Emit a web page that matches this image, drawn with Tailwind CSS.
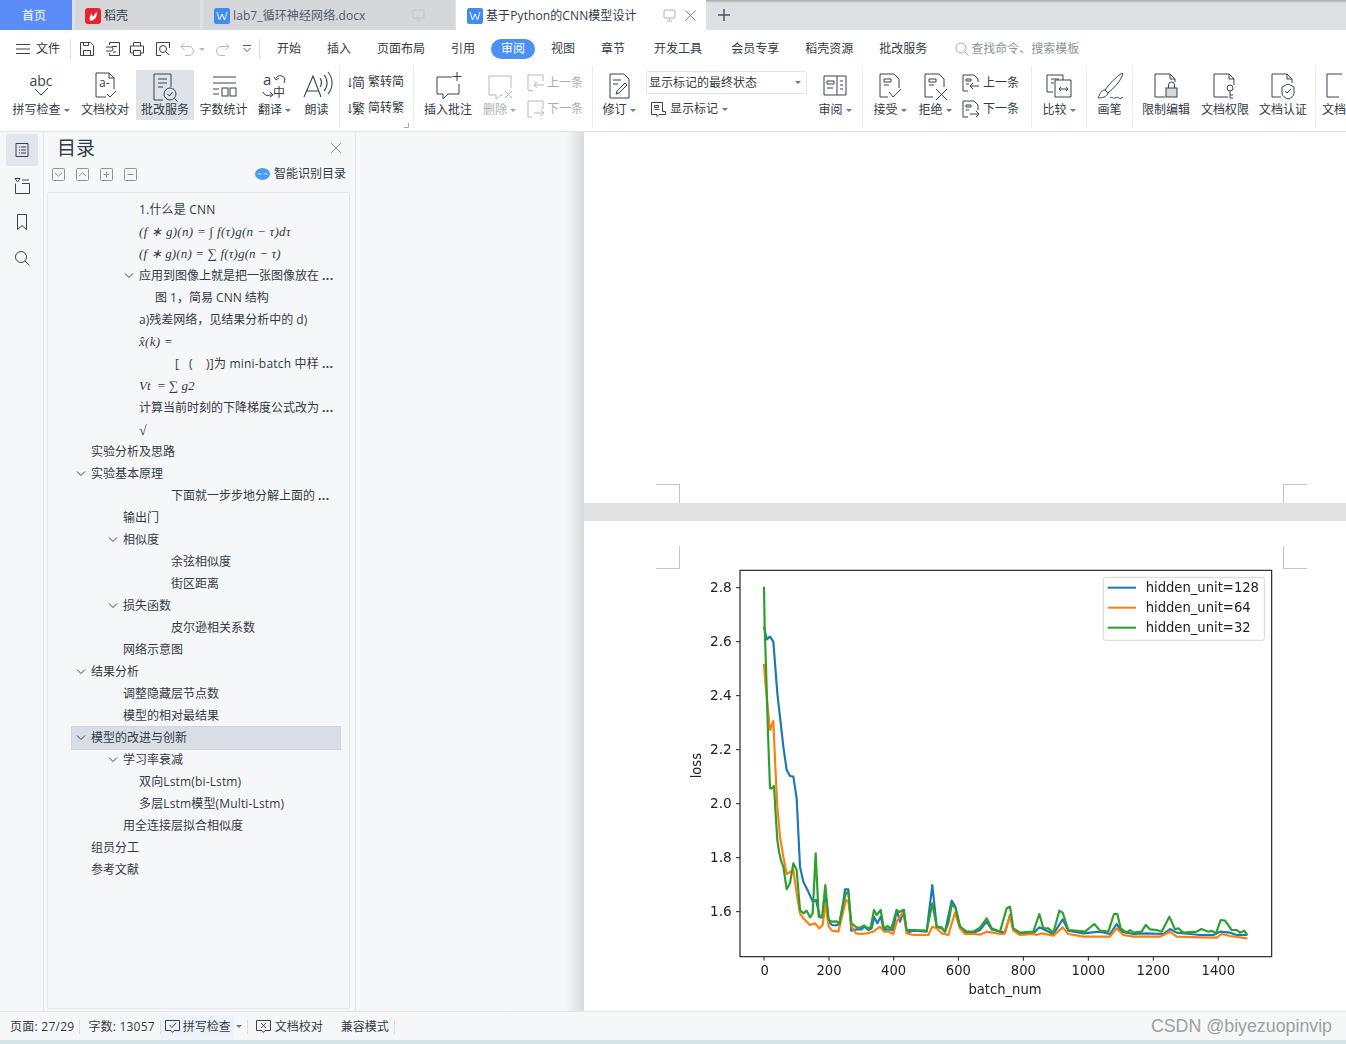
<!DOCTYPE html>
<html lang="zh">
<head>
<meta charset="utf-8">
<title>基于Python的CNN模型设计</title>
<script src="https://cdn.jsdelivr.net/npm/@tailwindcss/browser@4"></script>
</head>
<body class="w-[1346px] h-[1044px] overflow-hidden bg-white text-[12px] text-[#333a45] [font-family:'Open_Sans','Noto_Sans_CJK_SC',sans-serif]">
<div class="flex flex-col h-[1044px]">

<!-- tab bar -->
<div class="relative flex h-[30px] shrink-0 bg-[#dfe0e4]">
  <div class="absolute top-0 left-[706px] right-0 h-[3px] bg-gradient-to-b from-[#a5a6a9] to-transparent"></div>
  <div class="w-[72px] flex items-center justify-center bg-[#5b8cf8] text-white pt-[1px] pr-[4px]">首页</div>
  <div class="ml-[3px] w-[125px] flex items-center pl-[10px] pt-[1px] bg-[#d6d7db]">
    <svg class="w-[16px] h-[16px]" viewBox="0 0 16 16"><rect width="16" height="16" rx="3" fill="#e8222e"/><path d="M5 13c-1-3 0-6 2-8 0 2 0 3 1 4 1-2 2-4 4-5 0 4-1 8-7 9z" fill="#fff"/></svg>
    <span class="ml-[3px]">稻壳</span>
  </div>
  <div class="ml-[3px] w-[252px] flex items-center pl-[11px] pt-[1px] bg-[#d6d7db] text-[#555b66]">
    <svg class="w-[16px] h-[16px]" viewBox="0 0 16 16"><rect width="16" height="16" rx="2" fill="#3f8cf5"/><path d="M3 4l2.500 8L8 6l2.500 6L13 4" fill="none" stroke="#fff"/></svg>
    <span class="ml-[3px] tracking-[.1px]">lab7_循环神经网络.docx</span>
    <svg class="ml-auto mr-[30px] w-[13px] h-[13px]" viewBox="0 0 13 13" fill="none" stroke="#c3c5ca"><rect x="1" y="1" width="11" height="8" rx="1"/><path d="M6.500 9v2M4 12h5"/></svg>
  </div>
  <div class="ml-[1px] w-[250px] flex items-center pl-[11px] pt-[1px] bg-white">
    <svg class="w-[16px] h-[16px]" viewBox="0 0 16 16"><rect width="16" height="16" rx="2" fill="#3f8cf5"/><path d="M3 4l2.500 8L8 6l2.500 6L13 4" fill="none" stroke="#fff"/></svg>
    <span class="ml-[3px] tracking-[.1px]">基于Python的CNN模型设计</span>
    <svg class="ml-auto w-[13px] h-[13px]" viewBox="0 0 13 13" fill="none" stroke="#aeb1b7"><rect x="1" y="1" width="11" height="8" rx="1"/><path d="M6.500 9v2M4 12h5"/></svg>
    <svg class="ml-[9px] mr-[10px] w-[11px] h-[11px]" viewBox="0 0 11 11" stroke="#80858e"><path d="M.5.5l10 10M10.500.5l-10 10"/></svg>
  </div>
  <svg class="ml-[12px] mt-[9px] w-[12px] h-[12px]" viewBox="0 0 12 12" stroke="#4a5568" stroke-width="1.500"><path d="M6 0v12M0 6h12"/></svg>
</div>

<!-- menu row -->
<div class="flex items-center h-[36px] shrink-0 bg-white pt-[2px]">
  <svg class="ml-[16px] w-[14px] h-[12px]" viewBox="0 0 14 12" stroke="#3a4150"><path d="M0 1.500h14M0 6h14M0 10.500h14"/></svg>
  <span class="ml-[6px] w-[24px]">文件</span>
  <i class="ml-[10px] w-px h-[20px] bg-[#dfe0e3]"></i>
  <svg class="ml-[8px] w-[16px] h-[16px]" viewBox="0 0 16 16" fill="none" stroke="#3a4150"><path d="M1.500 1.500h10l3 3v10h-13zM4.500 14.500v-5h7v5M4.500 1.500v3h5v-3"/></svg>
  <svg class="ml-[10px] w-[16px] h-[16px]" viewBox="0 0 16 16" fill="none" stroke="#3a4150"><path d="M4.500 4V1.500h10v13h-10V12M1 6h5a2 2 0 012 2 2 2 0 01-2 2H1M12 5.500H7M11 11H8"/></svg>
  <svg class="ml-[8px] w-[16px] h-[16px]" viewBox="0 0 16 16" fill="none" stroke="#3a4150"><path d="M4.500 5V1.500h7V5M4.500 12h-3V5h13v7h-3M4.500 9.500h7v5h-7z"/></svg>
  <svg class="ml-[10px] w-[16px] h-[16px]" viewBox="0 0 16 16" fill="none" stroke="#3a4150"><path d="M6 14.500H1.500v-13h13V7"/><circle cx="8" cy="8" r="3.500"/><path d="M10.500 10.500l3.500 3.500"/></svg>
  <svg class="ml-[9px] w-[15px] h-[14px]" viewBox="0 0 15 14" fill="none" stroke="#b4b7bd"><path d="M4.500 1L1 4.500 4.500 8M1 4.500h8a4.500 4.500 0 010 9H5"/></svg>
  <i class="ml-[4px] border-x-[3px] border-t-[3px] border-x-transparent border-t-[#b4b7bd]"></i>
  <svg class="ml-[10px] w-[15px] h-[14px]" viewBox="0 0 15 14" fill="none" stroke="#b4b7bd"><path d="M10.500 1L14 4.500 10.500 8M14 4.500H6a4.500 4.500 0 000 9h4"/></svg>
  <svg class="ml-[13px] w-[8px] h-[8px]" viewBox="0 0 8 8" fill="none" stroke="#555b66"><path d="M0 .5h8M.5 3l3.500 3.500L7.500 3"/></svg>
  <i class="ml-[8px] w-px h-[20px] bg-[#dfe0e3]"></i>
  <div class="ml-[17px] flex items-center gap-[26px] whitespace-nowrap">
    <span>开始</span><span>插入</span><span>页面布局</span><span>引用</span>
    <span class="mx-[-10px] px-[10px] h-[20px] leading-[20px] rounded-full bg-[#4a90f5] text-white">审阅</span>
    <span>视图</span><span>章节</span><span class="ml-[3px]">开发工具</span><span class="ml-[3px]">会员专享</span><span>稻壳资源</span><span>批改服务</span>
  </div>
  <svg class="ml-[28px] w-[14px] h-[14px]" viewBox="0 0 14 14" fill="none" stroke="#a3a9b5"><circle cx="6" cy="6" r="5"/><path d="M9.500 9.500L13.500 13.500"/></svg>
  <span class="ml-[2px] text-[#8b92a0]">查找命令、搜索模板</span>
</div>

<!-- ribbon -->
<div class="flex *:shrink-0 h-[66px] shrink-0 overflow-hidden bg-white border-b border-[#e4e5e8] whitespace-nowrap pl-[8px]">
  <div class="w-[66px] flex flex-col items-center pt-[4px]">
    <svg class="w-[32px] h-[32px]" viewBox="0 0 32 32" fill="none" stroke="#3a4150"><text x="16" y="16" text-anchor="middle" stroke="none" class="fill-[#3a4150] text-[14px]">abc</text><path d="M10 19l6 6 7-7"/></svg>
    <span class="h-[16px] leading-[16px] flex items-center">拼写检查<i class="ml-[3px] border-x-[3px] border-t-[3px] border-x-transparent border-t-[#777]"></i></span>
  </div>
  <div class="w-[62px] flex flex-col items-center pt-[4px]">
    <svg class="w-[32px] h-[32px]" viewBox="0 0 32 32" fill="none" stroke="#3a4150"><path d="M17 27H7V3h13l5 5v11M20 3v5h5"/><text x="10" y="17" stroke="none" class="fill-[#3a4150] text-[12px]">a-</text><path d="M18 24l3 3 6-6"/></svg>
    <span class="h-[16px] leading-[16px]">文档校对</span>
  </div>
  <div class="w-[58px] h-[50px] flex flex-col items-center pt-[3px] mt-[4px] bg-[#dfe3e8]">
    <svg class="w-[32px] h-[29px]" viewBox="0 0 32 29" fill="none" stroke="#3a4150"><path d="M14 27H5V1h17v13M9 6h9M9 10h9M9 14h5"/><circle cx="21" cy="21" r="6"/><path d="M18.500 21l2 2 3-4M25.500 25.500l3 3"/></svg>
    <span class="h-[16px] leading-[16px]">批改服务</span>
  </div>
  <div class="w-[59px] flex flex-col items-center pt-[4px]">
    <svg class="w-[32px] h-[32px]" viewBox="0 0 32 32" fill="none" stroke="#3a4150"><path d="M5 7h23M5 13h23M5 19h6M5 24h6"/><rect x="14" y="18" width="6" height="8"/><rect x="22" y="18" width="6" height="8"/></svg>
    <span class="h-[16px] leading-[16px]">字数统计</span>
  </div>
  <div class="w-[41px] flex flex-col items-center pt-[4px] pl-[2px]">
    <svg class="w-[32px] h-[32px]" viewBox="0 0 32 32" fill="none" stroke="#3a4150"><text x="4" y="15" stroke="none" class="fill-[#3a4150] text-[15px]">a</text><text x="14" y="27" stroke="none" class="fill-[#3a4150] text-[12px]">中</text><path d="M17 8a5 5 0 019 1l-1 4M15 7l2 3 3-2M4 22a5 5 0 007 3h2M11 22l3 3-3 2"/></svg>
    <span class="h-[16px] leading-[16px] flex items-center">翻译<i class="ml-[3px] border-x-[3px] border-t-[3px] border-x-transparent border-t-[#777]"></i></span>
  </div>
  <div class="w-[45px] flex flex-col items-center pt-[4px]">
    <svg class="w-[32px] h-[32px]" viewBox="0 0 32 32" fill="none" stroke="#3a4150"><path d="M3 27L12 6l8 21M6 21h11M19 8a8 8 0 010 9M23 5a12 12 0 010 16M27 2a17 17 0 010 22" stroke-width="1.100"/></svg>
    <span class="h-[16px] leading-[16px]">朗读</span>
  </div>
  <i class="w-px h-[62px] bg-[#ebecee]"></i>
  <div class="relative w-[73px] pl-[8px] pt-[5px] flex flex-col gap-[4px]">
    <div class="h-[22px] flex items-center"><svg class="w-[4px] h-[14px]" viewBox="0 0 4 14" fill="none" stroke="#3a4150"><path d="M2 3v9M.5 10.500L2 12l1.500-1.500"/></svg><span class="text-[13px] leading-[20px] w-[16px]">简</span><span>繁转简</span></div>
    <div class="h-[22px] flex items-center"><svg class="w-[4px] h-[14px]" viewBox="0 0 4 14" fill="none" stroke="#3a4150"><path d="M2 3v9M.5 10.500L2 12l1.500-1.500"/></svg><span class="text-[13px] leading-[20px] w-[16px]">繁</span><span>简转繁</span></div>
    <svg class="absolute right-[4px] bottom-[3px] w-[5px] h-[5px]" viewBox="0 0 5 5" stroke="#a5a9b0" fill="none"><path d="M4.500 0v4.500H0"/></svg>
  </div>
  <i class="w-px h-[62px] bg-[#ebecee]"></i>
  <div class="w-[68px] flex flex-col items-center pt-[4px]">
    <svg class="w-[32px] h-[32px]" viewBox="0 0 32 32" fill="none" stroke="#3a4150"><path d="M20 7H5v17h6v5l5-5h11V14M25 2v9M20.500 6.500h9"/></svg>
    <span class="h-[16px] leading-[16px]">插入批注</span>
  </div>
  <div class="w-[35px] flex flex-col items-center pt-[4px] text-[#a9adb5]">
    <svg class="w-[32px] h-[32px]" viewBox="0 0 32 32" fill="none" stroke="#b4b7bd"><path d="M5 6h22v12M5 6v19h7v4l5-4h2M21 21l7 7M28 21l-7 7"/></svg>
    <span class="h-[16px] leading-[16px] flex items-center">删除<i class="ml-[3px] border-x-[3px] border-t-[3px] border-x-transparent border-t-[#aaa]"></i></span>
  </div>
  <div class="w-[75px] pl-[10px] pt-[7px] flex flex-col gap-[6px] text-[#a9adb5]">
    <div class="h-[20px] flex items-center"><svg class="w-[18px] h-[18px]" viewBox="0 0 18 18" fill="none" stroke="#b4b7bd"><path d="M6 17l-5-1V1h15v6M17 11H7M10 8l-3 3 3 3"/></svg><span class="ml-[2px]">上一条</span></div>
    <div class="h-[20px] flex items-center"><svg class="w-[18px] h-[18px]" viewBox="0 0 18 18" fill="none" stroke="#b4b7bd"><path d="M5 17H1V1h15v8M7 13h10M14 10l3 3-3 3"/></svg><span class="ml-[2px]">下一条</span></div>
  </div>
  <i class="w-px h-[62px] bg-[#ebecee]"></i>
  <div class="w-[50px] flex flex-col items-center pt-[4px] pl-[2px]">
    <svg class="w-[32px] h-[32px]" viewBox="0 0 32 32" fill="none" stroke="#3a4150"><path d="M7 4h14l5 5v19H7zM10 10h8M10 14h5M13 24l1-3 8-8 2 2-8 8z"/></svg>
    <span class="h-[16px] leading-[16px] flex items-center">修订<i class="ml-[3px] border-x-[3px] border-t-[3px] border-x-transparent border-t-[#777]"></i></span>
  </div>
  <div class="w-[168px] pl-[3px] pt-[5px]">
    <div class="w-[161px] h-[23px] flex items-center pl-[2px] pr-[5px] border border-[#e4e5e8] rounded-[2px]"><span>显示标记的最终状态</span><i class="ml-auto border-x-[3px] border-t-[3px] border-x-transparent border-t-[#777]"></i></div>
    <div class="mt-[4px] h-[22px] flex items-center pl-[4px]">
      <svg class="w-[17px] h-[17px]" viewBox="0 0 17 17" fill="none" stroke="#3a4150"><path d="M1.500 1.500h11v9h3v3H9l-2 2v-2H1.500zM4.500 4.500h4v2h-4zM4.500 8.500h5"/></svg>
      <span class="ml-[3px]">显示标记</span><i class="ml-[4px] border-x-[3px] border-t-[3px] border-x-transparent border-t-[#777]"></i>
    </div>
  </div>
  <div class="w-[51px] flex flex-col items-center pt-[4px] pr-[3px]">
    <svg class="w-[32px] h-[32px]" viewBox="0 0 32 32" fill="none" stroke="#3a4150"><path d="M5 6h22v19H5zM18 6v19M8 11h7v3H8zM8 18h6M21 11h3M21 15h3M21 19h3"/></svg>
    <span class="h-[16px] leading-[16px] flex items-center">审阅<i class="ml-[3px] border-x-[3px] border-t-[3px] border-x-transparent border-t-[#777]"></i></span>
  </div>
  <i class="w-px h-[62px] bg-[#ebecee]"></i>
  <div class="w-[50px] flex flex-col items-center pt-[4px] pl-[4px]">
    <svg class="w-[32px] h-[32px]" viewBox="0 0 32 32" fill="none" stroke="#3a4150"><path d="M14 27H6V4h14l5 5v9M10 9h7v3h-7zM10 15h5M15 22l4 5 8-8"/></svg>
    <span class="h-[16px] leading-[16px] flex items-center">接受<i class="ml-[3px] border-x-[3px] border-t-[3px] border-x-transparent border-t-[#777]"></i></span>
  </div>
  <div class="w-[46px] flex flex-col items-center pt-[4px] pr-[2px]">
    <svg class="w-[32px] h-[32px]" viewBox="0 0 32 32" fill="none" stroke="#3a4150"><path d="M14 27H6V4h14l5 5v8M10 9h7v3h-7zM10 15h5M17 19l11 11M28 19L17 30"/></svg>
    <span class="h-[16px] leading-[16px] flex items-center">拒绝<i class="ml-[3px] border-x-[3px] border-t-[3px] border-x-transparent border-t-[#777]"></i></span>
  </div>
  <div class="w-[72px] pl-[3px] pt-[7px] flex flex-col gap-[6px]">
    <div class="h-[20px] flex items-center"><svg class="w-[18px] h-[18px]" viewBox="0 0 18 18" fill="none" stroke="#3a4150"><path d="M6 17H1V1h11l4 4v3M4 5h5v2H4zM4 10h3M17 12H8M11 9l-3 3 3 3"/></svg><span class="ml-[3px]">上一条</span></div>
    <div class="h-[20px] flex items-center"><svg class="w-[18px] h-[18px]" viewBox="0 0 18 18" fill="none" stroke="#3a4150"><path d="M6 17H1V1h11l4 4v5M4 5h5v2H4zM4 10h3M8 14h9M14 11l3 3-3 3"/></svg><span class="ml-[3px]">下一条</span></div>
  </div>
  <i class="w-px h-[62px] bg-[#ebecee]"></i>
  <div class="w-[54px] flex flex-col items-center pt-[4px]">
    <svg class="w-[32px] h-[32px]" viewBox="0 0 32 32" fill="none" stroke="#3a4150"><path d="M10 22H4V5h16v5M8 9h8M8 13h3M12 10h16v17H12zM16 19h9M18 17l-2 2 2 2M23 17l2 2-2 2"/></svg>
    <span class="h-[16px] leading-[16px] flex items-center">比较<i class="ml-[3px] border-x-[3px] border-t-[3px] border-x-transparent border-t-[#777]"></i></span>
  </div>
  <i class="w-px h-[62px] bg-[#ebecee]"></i>
  <div class="w-[45px] flex flex-col items-center pt-[4px]">
    <svg class="w-[32px] h-[32px]" viewBox="0 0 32 32" fill="none" stroke="#3a4150"><path d="M28 3c-6 4-12 10-17 17l3 3c6-5 12-11 15-19zM11 20c-4 0-5 4-7 8 4 0 9-1 10-5M16 28c2-2 3 1 5 0s3-1 4 0 3 0 4-1"/></svg>
    <span class="h-[16px] leading-[16px]">画笔</span>
  </div>
  <i class="w-px h-[62px] bg-[#ebecee]"></i>
  <div class="w-[66px] flex flex-col items-center pt-[4px]">
    <svg class="w-[32px] h-[32px]" viewBox="0 0 32 32" fill="none" stroke="#3a4150"><path d="M15 27H5V4h15l5 5v3M20 4v5h5"/><rect x="16" y="18" width="11" height="9" fill="#d5d7db"/><path d="M18.500 18v-3a3 3 0 016 0v3"/></svg>
    <span class="h-[16px] leading-[16px]">限制编辑</span>
  </div>
  <div class="w-[52px] flex flex-col items-center pt-[4px]">
    <svg class="w-[32px] h-[32px]" viewBox="0 0 32 32" fill="none" stroke="#3a4150"><path d="M19 27H5V4h15l5 5v6M20 4v5h5"/><circle cx="21" cy="18" r="3"/><path d="M21 21v7M21 25h3M21 28h3"/></svg>
    <span class="h-[16px] leading-[16px]">文档权限</span>
  </div>
  <div class="w-[64px] flex flex-col items-center pt-[4px]">
    <svg class="w-[32px] h-[32px]" viewBox="0 0 32 32" fill="none" stroke="#3a4150"><path d="M14 27H5V4h15l5 5v4M20 4v5h5"/><path d="M15 17l6-3 6 3v6c0 3-3 5-6 6-3-1-6-3-6-6zM18 21l2 2 4-4"/></svg>
    <span class="h-[16px] leading-[16px]">文档认证</span>
  </div>
  <i class="w-px h-[62px] bg-[#ebecee]"></i>
  <div class="w-[40px] flex flex-col pl-[6px] pt-[4px]">
    <svg class="w-[32px] h-[32px]" viewBox="0 0 32 32" fill="none" stroke="#3a4150"><path d="M17 27H5V4h15"/></svg>
    <span class="h-[16px] leading-[16px]">文档</span>
  </div>
</div>

<!-- main -->
<div class="flex flex-1 min-h-0">
  <!-- rail -->
  <div class="w-[44px] shrink-0 bg-[#f6f7f9] border-r border-[#e3e5e9] flex flex-col items-start pl-[6px] pt-[2px]">
    <div class="w-[32px] h-[32px] rounded-[2px] bg-[#e2e5eb] flex items-center justify-center">
      <svg class="w-[16px] h-[16px]" viewBox="0 0 16 16" fill="none" stroke="#3a4150"><path d="M2 1.500h12v13H2zM5 5h1M7 5h5M5 8h1M7 8h5M5 11h1M7 11h5"/></svg>
    </div>
    <div class="w-[32px] h-[36px] flex items-center justify-center mt-[2px]">
      <svg class="w-[16px] h-[16px]" viewBox="0 0 16 16" fill="none" stroke="#3a4150"><path d="M1.500 5.500v10h14v-10H8M1 .5h5L3.500 4zM8 2h7"/></svg>
    </div>
    <div class="w-[32px] h-[36px] flex items-center justify-center">
      <svg class="w-[12px] h-[16px]" viewBox="0 0 12 16" fill="none" stroke="#3a4150"><path d="M1.500.5h9v15L6 11.500 1.500 15.500z"/></svg>
    </div>
    <div class="w-[32px] h-[36px] flex items-center justify-center">
      <svg class="w-[16px] h-[16px]" viewBox="0 0 16 16" fill="none" stroke="#3a4150"><circle cx="7" cy="7" r="5.500"/><path d="M11 11l4.500 4.500"/></svg>
    </div>
  </div>

  <!-- outline panel -->
  <div class="w-[312px] shrink-0 bg-[#f6f7f9] border-r border-[#e3e5e9] flex flex-col">
    <div class="h-[32px] flex items-center pl-[13px] pr-[14px]">
      <span class="text-[19px]">目录</span>
      <svg class="ml-auto w-[10px] h-[10px]" viewBox="0 0 10 10" stroke="#80858e"><path d="M0 0l10 10M10 0L0 10"/></svg>
    </div>
    <div class="h-[20px] flex items-center pl-[8px] pr-[9px]">
      <svg class="w-[13px] h-[13px]" viewBox="0 0 13 13" fill="none" stroke="#8f949c"><rect x=".5" y=".5" width="12" height="12" rx="1"/><path d="M3 5l3.500 3L10 5"/></svg>
      <svg class="ml-[11px] w-[13px] h-[13px]" viewBox="0 0 13 13" fill="none" stroke="#8f949c"><rect x=".5" y=".5" width="12" height="12" rx="1"/><path d="M3 8l3.500-3L10 8"/></svg>
      <svg class="ml-[11px] w-[13px] h-[13px]" viewBox="0 0 13 13" fill="none" stroke="#8f949c"><rect x=".5" y=".5" width="12" height="12" rx="1"/><path d="M3.500 6.500h6M6.500 3.500v6"/></svg>
      <svg class="ml-[11px] w-[13px] h-[13px]" viewBox="0 0 13 13" fill="none" stroke="#8f949c"><rect x=".5" y=".5" width="12" height="12" rx="1"/><path d="M3.500 6.500h6"/></svg>
      <svg class="ml-auto w-[15px] h-[12px]" viewBox="0 0 15 12"><ellipse cx="7.500" cy="6" rx="7.500" ry="6" fill="#4b9bf5"/><path d="M3 6.500c1-1.500 2.500-1.500 3 0M9 6.500c1-1.500 2.500-1.500 3 0" fill="none" stroke="#fff"/></svg>
      <span class="ml-[4px]">智能识别目录</span>
    </div>
    <div class="ml-[3px] mt-[8px] w-[303px] h-[817px] bg-[#f6f7f9] border border-[#e6e8eb] rounded-[2px] pt-[6px] whitespace-nowrap">
      <div class="h-[22px] flex items-center pl-[91px] tracking-[.2px]">1.什么是 CNN</div>
      <div class="h-[22px] flex items-center pl-[91px] text-[13px] italic tracking-[.3px] [font-family:'Liberation_Serif',serif]">(f ∗ g)(n) = ∫ f(τ)g(n − τ)dτ</div>
      <div class="h-[22px] flex items-center pl-[91px] text-[13px] italic tracking-[.15px] [font-family:'Liberation_Serif',serif]">(f ∗ g)(n) = ∑ f(τ)g(n − τ)</div>
      <div class="h-[22px] flex items-center pl-[76px]"><svg class="w-[15px] h-[6px]" viewBox="0 0 15 6" fill="none" stroke="#3a4150"><path d="M1 .5l4 4 4-4"/></svg>应用到图像上就是把一张图像放在<span class="ml-[3px] font-bold tracking-[.4px]">...</span></div>
      <div class="h-[22px] flex items-center pl-[107px]">图 1，简易 CNN 结构</div>
      <div class="h-[22px] flex items-center pl-[91px]">a)残差网络，见结果分析中的 d)</div>
      <div class="h-[22px] flex items-center pl-[91px] text-[13px] italic tracking-[.3px] [font-family:'Liberation_Serif',serif]">x̂(k) =</div>
      <div class="h-[22px] flex items-center pl-[127px] whitespace-pre tracking-[.2px]">[   (    )]为 mini-batch 中样<span class="ml-[3px] font-bold tracking-[.4px]">...</span></div>
      <div class="h-[22px] flex items-center pl-[91px] text-[13px] italic whitespace-pre [font-family:'Liberation_Serif',serif]">Vt  = ∑ g2</div>
      <div class="h-[22px] flex items-center pl-[91px]">计算当前时刻的下降梯度公式改为<span class="ml-[3px] font-bold tracking-[.4px]">...</span></div>
      <div class="h-[22px] flex items-center pl-[91px] text-[14px] [font-family:'Liberation_Serif',serif]">√</div>
      <div class="h-[22px] flex items-center pl-[43px]">实验分析及思路</div>
      <div class="h-[22px] flex items-center pl-[28px]"><svg class="w-[15px] h-[6px]" viewBox="0 0 15 6" fill="none" stroke="#3a4150"><path d="M1 .5l4 4 4-4"/></svg>实验基本原理</div>
      <div class="h-[22px] flex items-center pl-[123px]">下面就一步步地分解上面的<span class="ml-[3px] font-bold tracking-[.4px]">...</span></div>
      <div class="h-[22px] flex items-center pl-[75px]">输出门</div>
      <div class="h-[22px] flex items-center pl-[60px]"><svg class="w-[15px] h-[6px]" viewBox="0 0 15 6" fill="none" stroke="#3a4150"><path d="M1 .5l4 4 4-4"/></svg>相似度</div>
      <div class="h-[22px] flex items-center pl-[123px]">余弦相似度</div>
      <div class="h-[22px] flex items-center pl-[123px]">街区距离</div>
      <div class="h-[22px] flex items-center pl-[60px]"><svg class="w-[15px] h-[6px]" viewBox="0 0 15 6" fill="none" stroke="#3a4150"><path d="M1 .5l4 4 4-4"/></svg>损失函数</div>
      <div class="h-[22px] flex items-center pl-[123px]">皮尔逊相关系数</div>
      <div class="h-[22px] flex items-center pl-[75px]">网络示意图</div>
      <div class="h-[22px] flex items-center pl-[28px]"><svg class="w-[15px] h-[6px]" viewBox="0 0 15 6" fill="none" stroke="#3a4150"><path d="M1 .5l4 4 4-4"/></svg>结果分析</div>
      <div class="h-[22px] flex items-center pl-[75px]">调整隐藏层节点数</div>
      <div class="h-[22px] flex items-center pl-[75px]">模型的相对最结果</div>
      <div class="ml-[23px] w-[270px] h-[24px] my-[-1px] flex items-center pl-[4px] bg-[#d9dee6] border border-[#d1d6de]"><svg class="w-[15px] h-[6px]" viewBox="0 0 15 6" fill="none" stroke="#3a4150"><path d="M1 .5l4 4 4-4"/></svg>模型的改进与创新</div>
      <div class="h-[22px] flex items-center pl-[60px]"><svg class="w-[15px] h-[6px]" viewBox="0 0 15 6" fill="none" stroke="#3a4150"><path d="M1 .5l4 4 4-4"/></svg>学习率衰减</div>
      <div class="h-[22px] flex items-center pl-[91px] tracking-[.15px]">双向Lstm(bi-Lstm)</div>
      <div class="h-[22px] flex items-center pl-[91px] tracking-[.15px]">多层Lstm模型(Multi-Lstm)</div>
      <div class="h-[22px] flex items-center pl-[75px]">用全连接层拟合相似度</div>
      <div class="h-[22px] flex items-center pl-[43px]">组员分工</div>
      <div class="h-[22px] flex items-center pl-[43px]">参考文献</div>
    </div>
  </div>

  <!-- gutter -->
  <div class="w-[228px] shrink-0 bg-gradient-to-r from-[#f6f7f9] from-[92%] to-[#d9dadd]"></div>

  <!-- document -->
  <div class="flex-1 min-w-0 flex flex-col bg-white">
    <div class="relative h-[371px] shrink-0 bg-white">
      <i class="absolute left-[72px] top-[352px] w-[24px] h-[19px] border-t border-r border-[#c4c4c4]"></i>
      <i class="absolute left-[699px] top-[352px] w-[24px] h-[19px] border-t border-l border-[#c4c4c4]"></i>
    </div>
    <div class="h-[18px] shrink-0 bg-[#e0e1e3]"></div>
    <div class="relative flex-1 min-h-0 overflow-hidden bg-white">
      <i class="absolute left-[72px] top-[25px] w-[24px] h-[23px] border-b border-r border-[#c4c4c4]"></i>
      <i class="absolute left-[699px] top-[25px] w-[24px] h-[23px] border-b border-l border-[#c4c4c4]"></i>
      <svg class="ml-[96px] mt-[39px] w-[610px] h-[440px] blur-[.5px]" viewBox="0 0 1830 1320">
        <rect x="180" y="31" width="1595" height="1159" fill="none" stroke="#222" stroke-width="3.500"/>
        <path d="M252 1190v12M447 1190v12M641 1190v12M835 1190v12M1030 1190v12M1225 1190v12M1420 1190v12M1615 1190v12M180 83h-12M180 245h-12M180 407h-12M180 569h-12M180 731h-12M180 893h-12M180 1055h-12" stroke="#222" stroke-width="3"/>
        <polyline fill="none" stroke="#1f77b4" stroke-width="6.500" stroke-linejoin="round" points="252,200 260,238 270,230 280,245 292,400 310,560 320,630 330,648 340,650 350,715 360,920 370,965 385,995 398,1025 408,1020 420,1072 430,1070 436,1000 446,1085 456,1095 470,1096 478,1092 490,1025 495,988 505,988 514,1112 530,1108 545,1108 552,1100 565,1110 575,1105 582,1070 592,1090 602,1070 612,1112 622,1108 640,1110 650,1050 660,1085 672,1050 680,1118 700,1112 740,1115 757,975 770,1100 785,1105 795,1115 815,1022 826,1040 840,1100 860,1118 880,1118 900,1110 920,1085 935,1108 960,1115 975,1118 990,1065 1000,1110 1020,1120 1060,1120 1078,1102 1100,1112 1120,1122 1148,1078 1165,1112 1210,1120 1260,1115 1290,1122 1310,1092 1325,1115 1360,1122 1400,1120 1450,1122 1470,1107 1490,1118 1530,1122 1560,1125 1600,1125 1620,1115 1650,1118 1670,1125 1702,1125"/>
        <polyline fill="none" stroke="#ff7f0e" stroke-width="6.500" stroke-linejoin="round" points="252,312 256,370 262,430 270,510 280,483 286,620 292,740 300,830 310,890 320,942 340,930 350,1000 360,1060 370,1075 390,1095 405,1090 418,1105 428,1095 436,1030 446,1100 456,1112 475,1115 498,1020 505,1025 515,1100 528,1120 545,1122 560,1120 580,1115 600,1100 612,1115 625,1115 640,1122 650,1085 670,1055 680,1120 700,1125 745,1125 757,1100 770,1105 785,1120 805,1125 825,1058 840,1105 855,1122 880,1122 900,1124 920,1115 960,1122 972,1122 990,1068 1000,1112 1020,1125 1060,1122 1070,1125 1085,1120 1120,1127 1148,1102 1165,1122 1210,1130 1290,1130 1310,1105 1330,1125 1360,1130 1440,1130 1470,1115 1490,1130 1560,1132 1610,1133 1625,1122 1650,1128 1702,1135"/>
        <polyline fill="none" stroke="#2ca02c" stroke-width="6.500" stroke-linejoin="round" points="252,80 254,200 258,320 264,520 270,685 276,685 282,678 288,780 292,840 298,880 304,905 310,920 320,988 330,970 340,910 350,930 360,1050 370,1060 380,1052 390,1072 398,1060 407,880 416,1070 426,1072 436,975 446,1080 456,1085 470,1084 478,1092 490,1030 498,998 505,998 514,1090 530,1102 540,1103 552,1096 562,1104 572,1102 582,1050 590,1065 602,1050 612,1108 622,1098 634,1106 650,1050 658,1056 670,1050 680,1110 700,1110 740,1112 757,1030 770,1100 785,1102 795,1115 805,1090 815,1035 826,1042 840,1100 860,1115 880,1115 900,1103 920,1075 935,1105 960,1115 980,1045 990,1040 1000,1105 1020,1118 1060,1115 1078,1062 1090,1105 1105,1105 1120,1118 1138,1052 1148,1058 1165,1110 1185,1112 1215,1115 1243,1092 1260,1112 1285,1115 1302,1062 1312,1062 1322,1105 1340,1118 1350,1110 1360,1118 1385,1115 1397,1095 1410,1108 1430,1110 1445,1115 1468,1070 1485,1108 1495,1105 1510,1118 1550,1115 1564,1107 1585,1115 1595,1112 1608,1120 1622,1080 1635,1082 1655,1110 1670,1110 1680,1118 1693,1112 1702,1125"/>
        <rect x="1270" y="52" width="483" height="189" rx="6" fill="#fff" fill-opacity=".9" stroke="#d5d5d5" stroke-width="3"/>
        <path d="M1283 83h85" stroke="#1f77b4" stroke-width="6"/><path d="M1283 143h85" stroke="#ff7f0e" stroke-width="6"/><path d="M1283 203h85" stroke="#2ca02c" stroke-width="6"/>
        <g class="fill-[#222] text-[39.500px] [font-family:'DejaVu_Sans',sans-serif]">
          <text x="1397" y="96">hidden_unit=128</text>
          <text x="1397" y="156">hidden_unit=64</text>
          <text x="1397" y="216">hidden_unit=32</text>
          <g text-anchor="end" class="text-[41px]">
            <text x="155" y="96">2.8</text><text x="155" y="258">2.6</text><text x="155" y="420">2.4</text><text x="155" y="582">2.2</text><text x="155" y="744">2.0</text><text x="155" y="906">1.8</text><text x="155" y="1068">1.6</text>
          </g>
          <g text-anchor="middle">
            <text x="254" y="1246">0</text><text x="447" y="1246">200</text><text x="641" y="1246">400</text><text x="835" y="1246">600</text><text x="1030" y="1246">800</text><text x="1225" y="1246">1000</text><text x="1420" y="1246">1200</text><text x="1615" y="1246">1400</text>
            <text x="975" y="1302">batch_num</text>
            <text transform="translate(62 617) rotate(-90)">loss</text>
          </g>
        </g>
      </svg>
    </div>
  </div>
</div>

<!-- status bar -->
<div class="flex items-center h-[29px] shrink-0 bg-[#f6f7f9] border-t border-[#e3e4e8] whitespace-nowrap pl-[10px] pt-[1px]">
  <span class="tracking-[.25px]">页面: 27/29</span>
  <i class="ml-[5px] w-px h-[14px] bg-[#dcdee2]"></i>
  <span class="ml-[8px] tracking-[.2px]">字数: 13057</span>
  <i class="ml-[5px] w-px h-[14px] bg-[#dcdee2]"></i>
  <div class="h-[24px] flex items-center pl-[4px] pr-[3px] bg-[#eef3fb]">
    <svg class="w-[15px] h-[15px]" viewBox="0 0 15 15" fill="none" stroke="#3a4150"><path d="M.5 1.500h14v10H9l-1.500 2-1.500-2H.5zM4.500 6l2.500 2.500L11 4"/></svg>
    <span class="ml-[3px]">拼写检查</span>
  </div>
  <i class="ml-[2px] border-x-[3px] border-t-[3px] border-x-transparent border-t-[#777]"></i>
  <i class="ml-[5px] w-px h-[14px] bg-[#dcdee2]"></i>
  <svg class="ml-[8px] w-[15px] h-[15px]" viewBox="0 0 15 15" fill="none" stroke="#3a4150"><path d="M.5 1.500h14v10H9l-1.500 2-1.500-2H.5zM5 4l5 5M10 4l-5 5"/></svg>
  <span class="ml-[4px]">文档校对</span>
  <span class="ml-[18px]">兼容模式</span>
  <i class="ml-[5px] w-px h-[14px] bg-[#dcdee2]"></i>
  <span class="ml-auto mr-[14px] text-[17.800px] text-[#a0a0a0] [font-family:'Liberation_Sans',sans-serif]">CSDN @biyezuopinvip</span>
</div>
<div class="h-[4px] shrink-0 bg-[#d3e3e8]"></div>
</div>
</body>
</html>
